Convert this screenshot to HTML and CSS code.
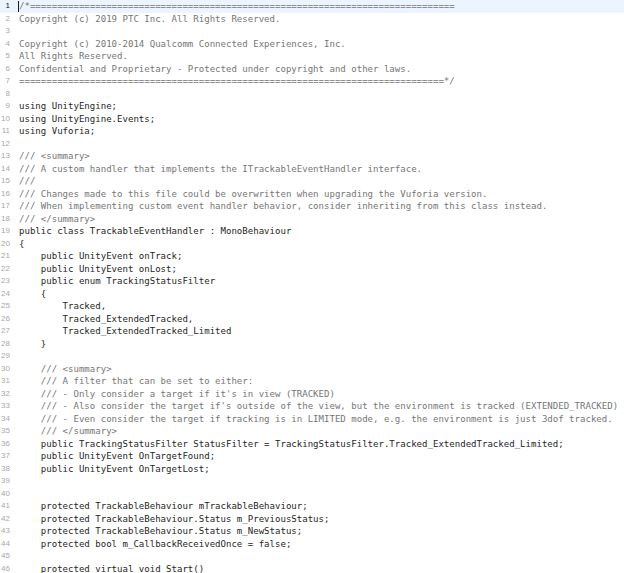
FILE: index.html
```html
<!DOCTYPE html>
<html>
<head>
<meta charset="utf-8">
<link rel="stylesheet" href="styles.css">
</head>
<body>
<div class="editor">
<div class="line current"><span class="num">1</span><span class="code cm"><span class="cursor"></span>/*==============================================================================</span></div>
<div class="line"><span class="num">2</span><span class="code cm">Copyright (c) 2019 PTC Inc. All Rights Reserved.</span></div>
<div class="line"><span class="num">3</span><span class="code cm"></span></div>
<div class="line"><span class="num">4</span><span class="code cm">Copyright (c) 2010-2014 Qualcomm Connected Experiences, Inc.</span></div>
<div class="line"><span class="num">5</span><span class="code cm">All Rights Reserved.</span></div>
<div class="line"><span class="num">6</span><span class="code cm">Confidential and Proprietary - Protected under copyright and other laws.</span></div>
<div class="line"><span class="num">7</span><span class="code cm">==============================================================================*/</span></div>
<div class="line"><span class="num">8</span><span class="code"></span></div>
<div class="line"><span class="num">9</span><span class="code">using UnityEngine;</span></div>
<div class="line"><span class="num">10</span><span class="code">using UnityEngine.Events;</span></div>
<div class="line"><span class="num">11</span><span class="code">using Vuforia;</span></div>
<div class="line"><span class="num">12</span><span class="code"></span></div>
<div class="line"><span class="num">13</span><span class="code cm">/// &lt;summary&gt;</span></div>
<div class="line"><span class="num">14</span><span class="code cm">/// A custom handler that implements the ITrackableEventHandler interface.</span></div>
<div class="line"><span class="num">15</span><span class="code cm">///</span></div>
<div class="line"><span class="num">16</span><span class="code cm">/// Changes made to this file could be overwritten when upgrading the Vuforia version.</span></div>
<div class="line"><span class="num">17</span><span class="code cm">/// When implementing custom event handler behavior, consider inheriting from this class instead.</span></div>
<div class="line"><span class="num">18</span><span class="code cm">/// &lt;/summary&gt;</span></div>
<div class="line"><span class="num">19</span><span class="code">public class TrackableEventHandler : MonoBehaviour</span></div>
<div class="line"><span class="num">20</span><span class="code">{</span></div>
<div class="line"><span class="num">21</span><span class="code">    public UnityEvent onTrack;</span></div>
<div class="line"><span class="num">22</span><span class="code">    public UnityEvent onLost;</span></div>
<div class="line"><span class="num">23</span><span class="code">    public enum TrackingStatusFilter</span></div>
<div class="line"><span class="num">24</span><span class="code">    {</span></div>
<div class="line"><span class="num">25</span><span class="code">        Tracked,</span></div>
<div class="line"><span class="num">26</span><span class="code">        Tracked_ExtendedTracked,</span></div>
<div class="line"><span class="num">27</span><span class="code">        Tracked_ExtendedTracked_Limited</span></div>
<div class="line"><span class="num">28</span><span class="code">    }</span></div>
<div class="line"><span class="num">29</span><span class="code"></span></div>
<div class="line"><span class="num">30</span><span class="code cm">    /// &lt;summary&gt;</span></div>
<div class="line"><span class="num">31</span><span class="code cm">    /// A filter that can be set to either:</span></div>
<div class="line"><span class="num">32</span><span class="code cm">    /// - Only consider a target if it's in view (TRACKED)</span></div>
<div class="line"><span class="num">33</span><span class="code cm">    /// - Also consider the target if's outside of the view, but the environment is tracked (EXTENDED_TRACKED)</span></div>
<div class="line"><span class="num">34</span><span class="code cm">    /// - Even consider the target if tracking is in LIMITED mode, e.g. the environment is just 3dof tracked.</span></div>
<div class="line"><span class="num">35</span><span class="code cm">    /// &lt;/summary&gt;</span></div>
<div class="line"><span class="num">36</span><span class="code">    public TrackingStatusFilter StatusFilter = TrackingStatusFilter.Tracked_ExtendedTracked_Limited;</span></div>
<div class="line"><span class="num">37</span><span class="code">    public UnityEvent OnTargetFound;</span></div>
<div class="line"><span class="num">38</span><span class="code">    public UnityEvent OnTargetLost;</span></div>
<div class="line"><span class="num">39</span><span class="code"></span></div>
<div class="line"><span class="num">40</span><span class="code"></span></div>
<div class="line"><span class="num">41</span><span class="code">    protected TrackableBehaviour mTrackableBehaviour;</span></div>
<div class="line"><span class="num">42</span><span class="code">    protected TrackableBehaviour.Status m_PreviousStatus;</span></div>
<div class="line"><span class="num">43</span><span class="code">    protected TrackableBehaviour.Status m_NewStatus;</span></div>
<div class="line"><span class="num">44</span><span class="code">    protected bool m_CallbackReceivedOnce = false;</span></div>
<div class="line"><span class="num">45</span><span class="code"></span></div>
<div class="line"><span class="num">46</span><span class="code">    protected virtual void Start()</span></div>
</div>
</body>
</html>
```
FILE: styles.css
```css
html, body {
  margin: 0;
  padding: 0;
  background: #ffffff;
  overflow: hidden;
}
.editor {
  display: flex;
  flex-direction: column;
  width: 624px;
}
.line {
  display: flex;
  align-items: center;
  height: 12.5px;
  line-height: 12.5px;
}
.line.current {
  background: #ecf4ff;
}
.num {
  width: 10px;
  flex: none;
  text-align: right;
  font-family: "Liberation Sans", Arial, sans-serif;
  font-size: 8px;
  color: #a8a8a8;
}
.current .num {
  color: #222222;
}
.code {
  position: relative;
  margin-left: 9px;
  white-space: pre;
  font-family: "DejaVu Sans Mono", monospace;
  font-size: 9.06px;
  color: #262626;
}
.code.cm {
  color: #767676;
}
.cursor {
  position: absolute;
  left: -1px;
  top: 1px;
  width: 1px;
  height: 11px;
  background: #1a1a1a;
}
```
